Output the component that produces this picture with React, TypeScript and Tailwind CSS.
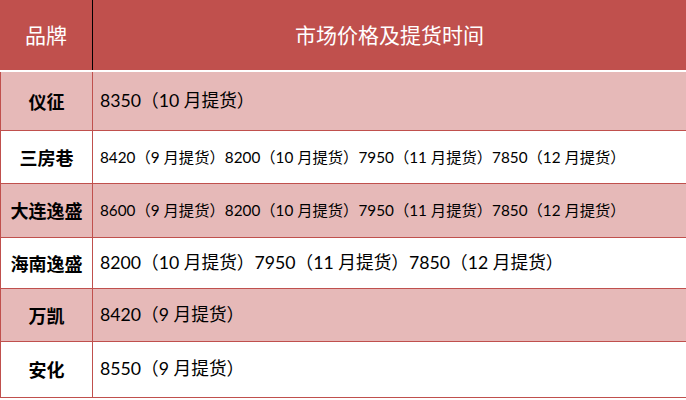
const rows = [
  { brand: '仪征', text: '8350（10 月提货）', small: false, pink: true, h: 'h-[59px]' },
  { brand: '三房巷', text: '8420（9 月提货）8200（10 月提货）7950（11 月提货）7850（12 月提货）', small: true, pink: false, h: 'h-[53px]' },
  { brand: '大连逸盛', text: '8600（9 月提货）8200（10 月提货）7950（11 月提货）7850（12 月提货）', small: true, pink: true, h: 'h-[54px]' },
  { brand: '海南逸盛', text: '8200（10 月提货）7950（11 月提货）7850（12 月提货）', small: false, pink: false, h: 'h-[51px]' },
  { brand: '万凯', text: '8420（9 月提货）', small: false, pink: true, h: 'h-[53px]' },
  { brand: '安化', text: '8550（9 月提货）', small: false, pink: false, h: 'h-[56px]' },
]

export default function App() {
  return (
    <div className="w-[686px] h-[400px] bg-white font-['Lato','Noto_Sans_CJK_SC',sans-serif] text-black">
      {/* header */}
      <div className="flex h-[72px] bg-[#c0504d] border-b-2 border-white text-white text-[21px]">
        <div className="w-[93px] shrink-0 border-r border-black flex items-center justify-center font-['Noto_Sans_CJK_SC',sans-serif]">
          品牌
        </div>
        <div className="flex-1 flex items-center justify-center font-['Noto_Sans_CJK_SC',sans-serif]">
          市场价格及提货时间
        </div>
      </div>

      {rows.map(r => (
        <div
          key={r.brand}
          className={`flex ${r.h} border-b border-l border-[#c0504d] ${r.pink ? 'bg-[#e6b9b8]' : 'bg-white'}`}
        >
          <div className="w-[92px] shrink-0 border-r border-[#c0504d] flex items-center justify-center font-['Noto_Sans_CJK_SC',sans-serif] font-bold text-[18px]">
            {r.brand}
          </div>
          <div className={`flex-1 flex items-center pl-[7px] whitespace-nowrap ${r.small ? 'text-[15.3px]' : 'text-[17.7px]'}`}>
            {r.text}
          </div>
        </div>
      ))}
    </div>
  )
}
